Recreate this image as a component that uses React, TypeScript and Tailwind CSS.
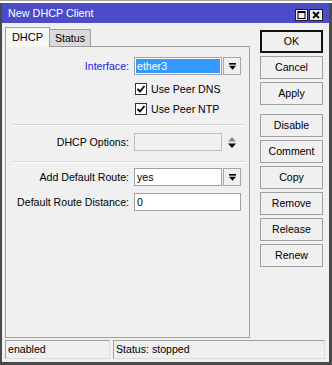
import React from "react";

function DropBtn() {
  return (
    <div className="w-[18px] h-[18px] ml-[1px] border border-[#a8a8a8] bg-[#f0f0f0] flex items-center justify-center">
      <svg width="9" height="9" viewBox="0 0 9 9">
        <rect x="1" y="1" width="7" height="1.6" fill="#000" />
        <polygon points="1,3.8 8,3.8 4.5,7.8" fill="#000" />
      </svg>
    </div>
  );
}

function Check() {
  return (
    <div className="w-[12px] h-[12px] border border-[#333] bg-white flex items-center justify-center">
      <svg width="10" height="10" viewBox="0 0 10 10">
        <path d="M1.5 5 L4 7.5 L8.5 2" stroke="#000" strokeWidth="1.8" fill="none" />
      </svg>
    </div>
  );
}

function Btn({ label, def, className = "" }: { label: string; def?: boolean; className?: string }) {
  return (
    <div
      className={
        "w-[63px] h-[23px] flex items-center justify-center bg-[#f0f0f0] " +
        (def ? "border-2 border-[#111]" : "border border-[#a0a0a0]") +
        " " +
        className
      }
    >
      {label}
    </div>
  );
}

export default function App() {
  return (
    <div className="w-[332px] h-[365px] bg-white overflow-hidden text-[10.6px] text-black font-['Liberation_Sans',Arial,sans-serif] leading-none">
      <div className="h-[3px] border-t border-[#a0a0a0] bg-white" />
      <div className="h-[362px] flex flex-col border-l-2 border-r-[3px] border-b-[3px] border-[#4a4a4a] bg-[#f0f0f0]">
        {/* Title bar */}
        <div className="h-[20px] bg-[#4c4cc8] flex items-center pl-[6px] pr-[6px]">
          <span className="text-white text-[10.8px]">New DHCP Client</span>
          <div className="ml-auto flex gap-[1px] mt-[3px]">
            <div className="w-[13px] h-[12px] bg-[#ececec] border border-[#202020] flex items-center justify-center">
              <svg width="9" height="8" viewBox="0 0 9 8">
                <rect x="1" y="0.5" width="7" height="7" fill="none" stroke="#000" strokeWidth="1" />
                <rect x="1" y="0.5" width="7" height="1.5" fill="#000" />
              </svg>
            </div>
            <div className="w-[14px] h-[12px] bg-[#ececec] border border-[#202020] flex items-center justify-center">
              <svg width="8" height="8" viewBox="0 0 8 8">
                <path d="M1 1 L7 7 M7 1 L1 7" stroke="#000" strokeWidth="1.8" />
              </svg>
            </div>
          </div>
        </div>

        {/* Body */}
        <div className="flex-1 flex flex-col pt-[4px] px-[3px] pb-[3px]">
          <div className="flex-1 flex gap-[10px]">
            {/* Left: tabs + panel */}
            <div className="w-[245px] flex flex-col">
              <div className="h-[20px] flex items-end relative z-10">
                <div className="h-[20px] w-[45px] border border-b-0 border-[#a0a0a0] bg-[#f7f7f7] flex items-center justify-center pb-[1px] text-[11px]">
                  DHCP
                </div>
                <div className="h-[18px] w-[41px] border border-l-0 border-[#a0a0a0] bg-[#dadada] flex items-center justify-center">
                  Status
                </div>
              </div>
              <div className="flex-1 -mt-[1px] border border-[#a0a0a0] bg-[#f0f0f0] flex flex-col pt-[10px]">
                {/* Interface */}
                <div className="flex items-center h-[18px]">
                  <div className="w-[123px] text-right text-[#2020e0]">Interface:</div>
                  <div className="ml-[5px] w-[88px] h-[18px] border border-[#a0a0a0] bg-white p-[1px]">
                    <div className="h-full bg-[#3399ff] text-white flex items-center pl-[1px]">ether3</div>
                  </div>
                  <DropBtn />
                </div>
                {/* Checkboxes */}
                <div className="mt-[4px] h-[20px] flex items-center pl-[129px]">
                  <Check />
                  <span className="ml-[4px]">Use Peer DNS</span>
                </div>
                <div className="h-[20px] flex items-center pl-[129px]">
                  <Check />
                  <span className="ml-[4px]">Use Peer NTP</span>
                </div>
                <div className="mt-[5px] ml-[7px] mr-[4px] border-t border-[#d6d6d6] border-b border-b-white" />
                {/* DHCP Options */}
                <div className="mt-[7px] flex items-center h-[18px]">
                  <div className="w-[123px] text-right">DHCP Options:</div>
                  <div className="ml-[5px] w-[88px] h-[18px] border border-[#bdbdbd] bg-[#f0f0f0]" />
                  <div className="ml-[5px] flex items-center">
                    <svg width="10" height="13" viewBox="0 0 10 13">
                      <polygon points="1,5.5 9,5.5 5,1" fill="#8a8a8a" />
                      <polygon points="1,7.5 9,7.5 5,12" fill="#000" />
                    </svg>
                  </div>
                </div>
                <div className="mt-[10px] ml-[7px] mr-[4px] border-t border-[#d6d6d6] border-b border-b-white" />
                {/* Add default route */}
                <div className="mt-[5px] flex items-center h-[18px]">
                  <div className="w-[123px] text-right">Add Default Route:</div>
                  <div className="ml-[5px] w-[88px] h-[18px] border border-[#a0a0a0] bg-white flex items-center pl-[2px]">
                    yes
                  </div>
                  <DropBtn />
                </div>
                {/* Distance */}
                <div className="mt-[7px] flex items-center h-[18px]">
                  <div className="w-[123px] text-right">Default Route Distance:</div>
                  <div className="ml-[5px] w-[107px] h-[18px] border border-[#a0a0a0] bg-white flex items-center pl-[2px]">
                    0
                  </div>
                </div>
              </div>
            </div>

            {/* Right: buttons */}
            <div className="w-[63px] pt-[3px] flex flex-col gap-[3px]">
              <Btn label="OK" def />
              <Btn label="Cancel" />
              <Btn label="Apply" />
              <Btn label="Disable" className="mt-[6px]" />
              <Btn label="Comment" />
              <Btn label="Copy" />
              <Btn label="Remove" />
              <Btn label="Release" />
              <Btn label="Renew" />
            </div>
          </div>

          {/* Status bar */}
          <div className="mt-[2px] h-[19px] flex gap-[3px] mr-[1px]">
            <div className="w-[105px] h-full border border-[#a0a0a0] border-r-[#dcdcdc] border-b-[#dcdcdc] flex items-center pl-[2px]">
              enabled
            </div>
            <div className="flex-1 h-full border border-[#a0a0a0] border-r-[#dcdcdc] border-b-[#dcdcdc] flex items-center pl-[2px]">
              Status: stopped
            </div>
          </div>
        </div>
      </div>
    </div>
  );
}
